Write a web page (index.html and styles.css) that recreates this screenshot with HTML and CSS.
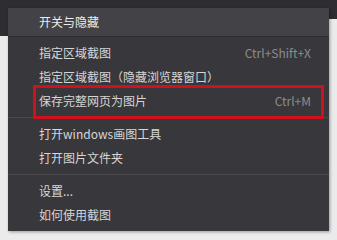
FILE: index.html
```html
<!DOCTYPE html>
<html lang="zh-CN">
<head>
    <meta charset="UTF-8">
    <meta name="viewport" content="width=device-width, initial-scale=1.0">
    <title>截图菜单</title>
    <link rel="stylesheet" href="styles.css">
</head>
<body>
    <div class="backdrop">
        <div class="toolbar">
            <div class="toolbar-left"></div>
            <div class="toolbar-right"></div>
        </div>
    </div>
    <div class="menu">
        <div class="menu-header">开关与隐藏</div>
        <div class="menu-group">
            <div class="menu-item"><span>指定区域截图</span><span class="shortcut">Ctrl+Shift+X</span></div>
            <div class="menu-item"><span>指定区域截图（隐藏浏览器窗口）</span></div>
            <div class="menu-item highlight"><span>保存完整网页为图片</span><span class="shortcut">Ctrl+M</span></div>
        </div>
        <div class="menu-group">
            <div class="menu-item"><span>打开windows画图工具</span></div>
            <div class="menu-item"><span>打开图片文件夹</span></div>
        </div>
        <div class="menu-group">
            <div class="menu-item"><span>设置...</span></div>
            <div class="menu-item"><span>如何使用截图</span></div>
        </div>
    </div>
</body>
</html>
```

FILE: styles.css
```css
body {
    margin: 0;
    padding: 0;
    width: 337px;
    height: 240px;
    overflow: hidden;
    background: #ebebeb;
    font-family: "Noto Sans CJK SC", "Microsoft YaHei", sans-serif;
    position: relative;
}
.backdrop {
    height: 240px;
}
.toolbar {
    display: flex;
    align-items: flex-start;
}
.toolbar-left {
    flex: 1;
    height: 36px;
    background: #2e2e32;
}
.toolbar-right {
    width: 40px;
    height: 19px;
    background: #2e2e32;
}
/* the popup menu lies over the page */
.menu {
    position: absolute;
    left: 8px;
    top: 8px;
    width: 321px;
    height: 223px;
    background: #38383c;
    box-shadow: 1px 1px 3px rgba(0, 0, 0, 0.35);
    box-sizing: border-box;
}
.menu-header {
    height: 28px;
    line-height: 28px;
    padding-left: 31px;
    background: #434347;
    color: #ececec;
    font-size: 12px;
    border-bottom: 1px solid #2d2d31;
}
.menu-group {
    padding: 4px 0;
    border-bottom: 1px solid #4a4a4e;
}
.menu-group:last-child {
    border-bottom: none;
}
.menu-item {
    display: flex;
    justify-content: space-between;
    height: 24px;
    line-height: 24px;
    padding: 0 18px 0 31px;
    color: #d6d6d6;
    font-size: 12px;
    position: relative;
}
.shortcut {
    color: #8c8c8c;
}
.highlight::after {
    content: "";
    position: absolute;
    left: 25px;
    right: 5px;
    top: -4px;
    bottom: -6px;
    border: 3px solid #d0111b;
}
```
